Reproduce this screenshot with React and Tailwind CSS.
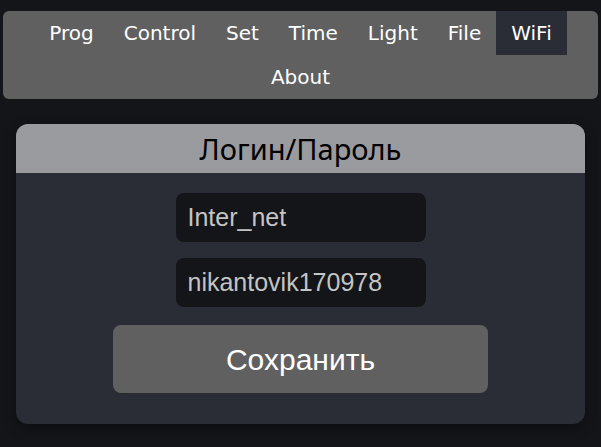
export default function App() {
  const items = ["Prog", "Control", "Set", "Time", "Light", "File", "WiFi", "About"];
  return (
    <div className="min-h-[447px] bg-[#131519] px-[3px] pt-[11px] pb-6">
      <nav className="flex flex-wrap justify-center rounded-md bg-[#606060] px-7 font-['DejaVu_Sans',sans-serif] text-[20px] text-white">
        {items.map((it) => (
          <a
            key={it}
            className={
              "flex h-[44px] items-center px-[15px] " + (it === "WiFi" ? "bg-[#2a2d36]" : "")
            }
          >
            {it}
          </a>
        ))}
      </nav>
      <div className="mx-[13px] mt-[25px] overflow-hidden rounded-xl bg-[#2a2d36] shadow-[0_4px_12px_rgba(0,0,0,0.4)]">
        <div className="flex h-[49px] items-center justify-center bg-[#9a9b9f] font-['Noto_Sans',sans-serif] text-[29px] text-black">
          Логин/Пароль
        </div>
        <div className="flex flex-col items-center pt-5 pb-[31px] font-['Liberation_Sans',Arial,sans-serif]">
          <input
            defaultValue="Inter_net"
            className="h-[49px] w-[250px] rounded-lg bg-[#131519] px-3 text-[25px] text-[#c4c4c4] outline-none"
          />
          <input
            defaultValue="nikantovik170978"
            className="mt-4 h-[49px] w-[250px] rounded-lg bg-[#131519] px-3 text-[25px] text-[#c4c4c4] outline-none"
          />
          <button className="mt-[18px] h-[68px] w-[375px] rounded-lg bg-[#606060] text-[30px] text-white">
            Сохранить
          </button>
        </div>
      </div>
    </div>
  );
}
